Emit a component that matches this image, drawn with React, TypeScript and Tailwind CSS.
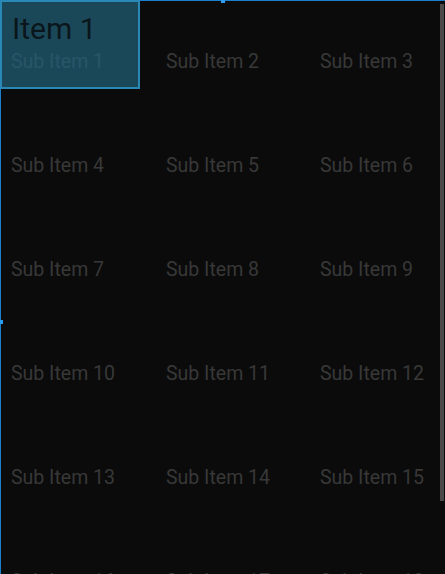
const subItems = Array.from({ length: 18 }, (_, i) => `Sub Item ${i + 1}`);

export default function App() {
  return (
    <div
      className="relative w-[445px] h-[574px] overflow-hidden bg-[#0b0b0b]"
      style={{ fontFamily: "Roboto, 'Noto Sans', sans-serif" }}
    >
      {/* Sub item grid */}
      <div className="grid grid-cols-[155px_154px_1fr]">
        {subItems.map((s) => (
          <div key={s} className="h-[104px] pt-[50px] pl-[11px]">
            <span className="text-[19.5px] leading-[24px] text-[#383838] whitespace-nowrap">{s}</span>
          </div>
        ))}
      </div>

      {/* selection outline */}
      <div className="absolute left-0 top-0 w-full h-px bg-[#1b7fcc]" />
      <div className="absolute left-0 top-0 h-full w-px bg-[#1b7fcc]" />
      <div className="absolute left-[221px] top-0 w-[4px] h-[3px] bg-[#2a9df0]" />
      <div className="absolute left-0 top-[320px] w-[3px] h-[4px] bg-[#2a9df0]" />

      {/* highlighted item */}
      <div className="absolute left-0 top-0 w-[140px] h-[89px] border-2 border-[#2a88b6] bg-[#22637a]/70 pl-[10px] pt-[9px]">
        <span className="text-[30px] leading-[36px] text-[#0a161b]">Item 1</span>
      </div>

      {/* scrollbar */}
      <div className="absolute left-[440px] top-[4px] w-[4px] h-[497px] bg-[#4a4a4a]" />
    </div>
  );
}
